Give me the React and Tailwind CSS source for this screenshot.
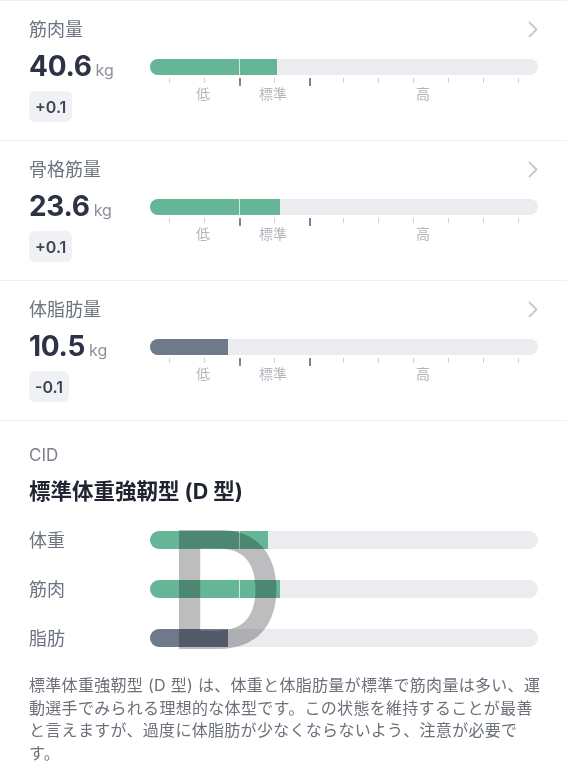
import React from 'react';

const font = { fontFamily: 'Inter, "Noto Sans CJK JP", sans-serif' };

const metrics = [
  { label: '筋肉量', value: '40.6', diff: '+0.1', fill: 127, color: 'bg-[#65b697]', divider: true },
  { label: '骨格筋量', value: '23.6', diff: '+0.1', fill: 130, color: 'bg-[#65b697]', divider: true },
  { label: '体脂肪量', value: '10.5', diff: '-0.1', fill: 78, color: 'bg-[#6f798c]', divider: false },
];

const ticks = [19, 54, 89, 124, 159, 193, 228, 263, 298, 333, 368];

function Chevron() {
  return (
    <svg width="10" height="17" viewBox="0 0 10 17" fill="none">
      <path d="M1.5 1.5l7 7-7 7" stroke="#c9c9ce" strokeWidth="1.8" strokeLinecap="round" strokeLinejoin="round" />
    </svg>
  );
}

function Bar({ fill, color, divider, height = 'h-[16px]' }) {
  return (
    <div className={`relative ${height} w-full overflow-hidden rounded-full bg-[#ebecef]`}>
      <div className={`h-full ${color}`} style={{ width: fill }} />
      {divider && <div className="absolute left-[89px] top-0 h-full w-px bg-white/70" />}
    </div>
  );
}

function MetricRow({ m }) {
  return (
    <section className="h-[140px] border-b border-[#efeff2] px-[29px] pt-[16px]">
      <div className="flex h-[24px] items-center justify-between">
        <span className="text-[18px] text-[#6e7380]">{m.label}</span>
        <Chevron />
      </div>
      <div className="mt-[11px] flex">
        <div className="w-[121px] shrink-0">
          <div className="flex h-[29px] items-baseline">
            <span className="text-[28px] font-bold leading-none tracking-[-0.3px] text-[#2d3345]">{m.value}</span>
            <span className="ml-[4px] text-[16px] leading-none text-[#8c909a]">kg</span>
          </div>
          <div className="mt-[10px] inline-flex h-[31px] items-center rounded-[6px] bg-[#f0f1f4] px-[6px] text-[16px] font-semibold text-[#3f4555]">
            {m.diff}
          </div>
        </div>
        <div className="flex-1 pt-[7px]">
          <Bar fill={m.fill} color={m.color} divider={m.divider} />
          <div className="relative mt-[3px] h-[30px]">
            {ticks.map((t, i) => (
              <div
                key={t}
                className={
                  i === 2 || i === 4
                    ? 'absolute top-0 h-[8px] w-[1.5px] bg-[#7e838c]'
                    : 'absolute top-0 h-[5px] w-px bg-[#cdd0d4]'
                }
                style={{ left: t }}
              />
            ))}
            <span className="absolute left-[46px] top-[7px] text-[14px] leading-[18px] text-[#b3b6bc]">低</span>
            <span className="absolute left-[109px] top-[7px] text-[14px] leading-[18px] text-[#b3b6bc]">標準</span>
            <span className="absolute left-[266px] top-[7px] text-[14px] leading-[18px] text-[#b3b6bc]">高</span>
          </div>
        </div>
      </div>
    </section>
  );
}

const cidRows = [
  { label: '体重', fill: 118, color: 'bg-[#65b697]', divider: true },
  { label: '筋肉', fill: 130, color: 'bg-[#65b697]', divider: true },
  { label: '脂肪', fill: 78, color: 'bg-[#6f798c]', divider: false },
];

export default function App() {
  return (
    <div className="min-h-[780px] w-full bg-white" style={font}>
      <div className="border-t border-[#efeff2]">
        {metrics.map((m) => (
          <MetricRow key={m.label} m={m} />
        ))}
      </div>

      <section className="px-[29px] pt-[22px]">
        <p className="text-[17px] leading-[24px] text-[#7b808b]">CID</p>
        <h2 className="mt-[10px] text-[21.5px] font-bold leading-[28px] text-[#1f2430]">標準体重強靭型 (D 型)</h2>

        <div className="relative mt-[26px] flex flex-col gap-[31px]">
          {cidRows.map((r) => (
            <div key={r.label} className="flex h-[18px] items-center">
              <span className="w-[121px] shrink-0 text-[18px] text-[#6e7380]">{r.label}</span>
              <div className="flex-1">
                <Bar fill={r.fill} color={r.color} divider={r.divider} height="h-[18px]" />
              </div>
            </div>
          ))}
          <span className="pointer-events-none absolute left-[138px] top-0 select-none text-[163px] font-semibold leading-[118px] text-[#bdbdbf] mix-blend-multiply">
            D
          </span>
        </div>

        <p className="mt-[27px] text-[16px] leading-[22.5px] tracking-[0.3px] text-[#6b7079]">
          <span className="block whitespace-nowrap">標準体重強靭型 (D 型) は、体重と体脂肪量が標準で筋肉量は多い、運</span>
          <span className="block whitespace-nowrap">動選手でみられる理想的な体型です。この状態を維持することが最善</span>
          <span className="block whitespace-nowrap">と言えますが、過度に体脂肪が少なくならないよう、注意が必要で</span>
          <span className="block whitespace-nowrap">す。</span>
        </p>
      </section>
    </div>
  );
}
